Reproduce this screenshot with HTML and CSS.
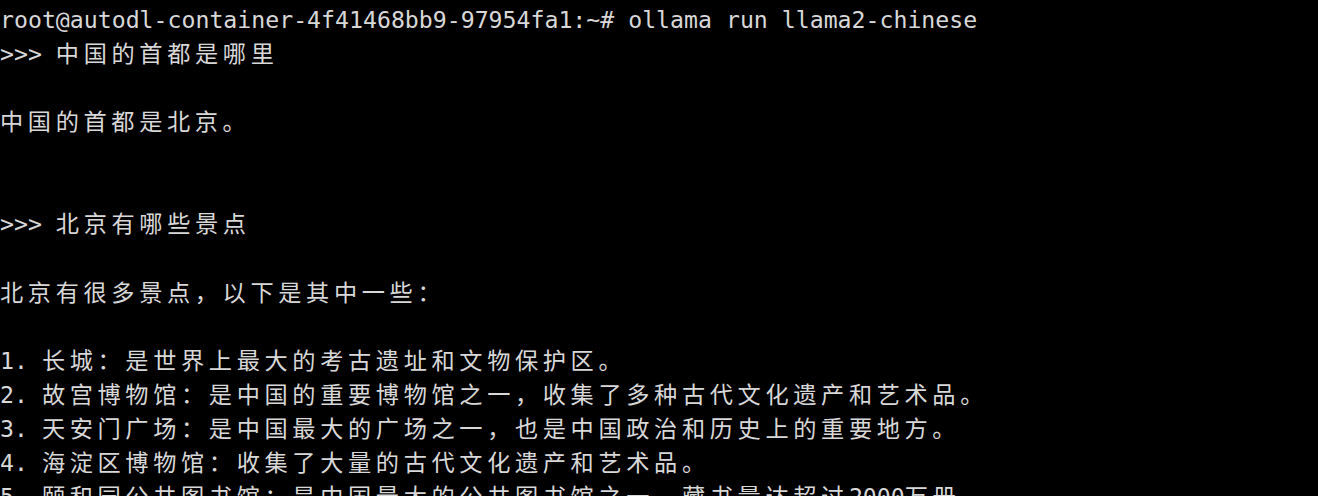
FILE: index.html
```html
<!DOCTYPE html>
<html lang="zh">
<head>
<meta charset="utf-8">
<title>ollama run llama2-chinese</title>
<link rel="stylesheet" href="styles.css">
</head>
<body>
<div class="term">
<div class="line">root@autodl-container-4f41468bb9-97954fa1:~# ollama run llama2-chinese</div>
<div class="line">&gt;&gt;&gt; <span class="w">中国的首都是哪里</span></div>
<div class="line"></div>
<div class="line"><span class="w">中国的首都是北京。</span></div>
<div class="line"></div>
<div class="line"></div>
<div class="line">&gt;&gt;&gt; <span class="w">北京有哪些景点</span></div>
<div class="line"></div>
<div class="line"><span class="w">北京有很多景点，以下是其中一些：</span></div>
<div class="line"></div>
<div class="line">1. <span class="w">长城：是世界上最大的考古遗址和文物保护区。</span></div>
<div class="line">2. <span class="w">故宫博物馆：是中国的重要博物馆之一，收集了多种古代文化遗产和艺术品。</span></div>
<div class="line">3. <span class="w">天安门广场：是中国最大的广场之一，也是中国政治和历史上的重要地方。</span></div>
<div class="line">4. <span class="w">海淀区博物馆：收集了大量的古代文化遗产和艺术品。</span></div>
<div class="line">5. <span class="w">颐和园公共图书馆：是中国最大的公共图书馆之一，藏书量达超过</span>2000<span class="w">万册。</span></div>
</div>
</body>
</html>
```
FILE: styles.css
```css
html, body {
  margin: 0;
  padding: 0;
  background: #000;
}
.term {
  padding: 3px 0 0 0;
  font-family: "DejaVu Sans Mono", "Noto Sans CJK SC", monospace;
  font-size: 23.2px;
  line-height: 34.07px;
  color: #d8d8d8;
  overflow: hidden;
  height: 496px;
  box-sizing: border-box;
}
.line {
  height: 34.07px;
  white-space: pre;
}
.w {
  letter-spacing: 4.64px;
}
```
